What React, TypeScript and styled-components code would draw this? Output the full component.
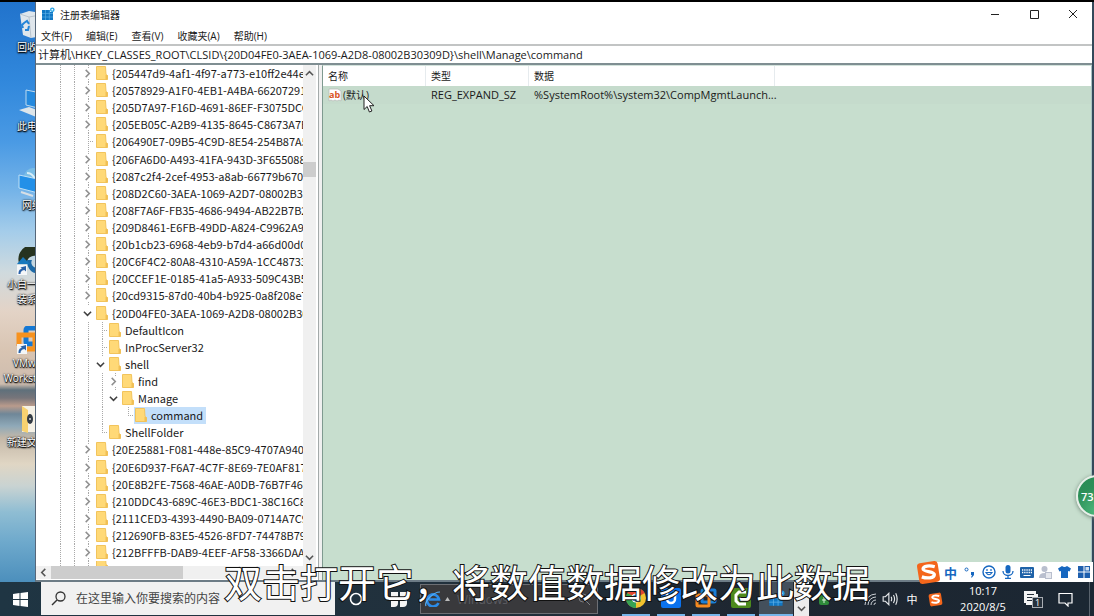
import React from "react";
import styled, { createGlobalStyle, css } from "styled-components";

const uiFont = `"Open Sans", "Noto Sans CJK SC", sans-serif`;
const treeFont = `"Noto Sans CJK SC", sans-serif`;
const dots = "#a9a9a9";

const GlobalStyle = createGlobalStyle`
  * { box-sizing: border-box; }
  body { margin: 0; background: #000; font-family: ${uiFont}; font-size: 11px; color: #1a1a1a; overflow: hidden; }
  button, input { font: inherit; color: inherit; border: 0; padding: 0; margin: 0; background: none; outline: 0; }
  ul { list-style: none; margin: 0; padding: 0; }
  svg { display: block; flex: none; }
`;

const Screen = styled.div`
  position: relative;
  display: flex;
  flex-direction: column;
  height: 100vh;
  border-top: 2px solid #000;
  overflow: hidden;
`;

const Stage = styled.main`
  flex: 1;
  min-height: 0;
  display: flex;
  background: #34495a;
  padding-right: 2px;
`;

/* Desktop */
const Desktop = styled.ul`
  flex: none;
  width: 35px;
  overflow: hidden;
  padding-top: 4px;
  background: linear-gradient(
    to bottom,
    #2173cc 0, #3188dc 80px, #4a9ae4 140px, #76b4e8 190px, #a5cdea 230px,
    #cfdade 270px, #e3d3c6 310px, #d8c4b2 350px, #cdbcae 382px, #5f707b 388px,
    #77757a 396px, #b99b8c 404px, #6f8798 412px, #8fa9b8 424px, #c4b8a8 436px,
    #e0d6c4 462px, #c9d3d2 484px, #8fbdd3 510px, #6ea9cc 540px, #4c8fbc 580px
  );
`;

const Shortcut = styled.li`
  width: 64px;
  height: 79px;
  padding-top: 4px;
  display: flex;
  flex-direction: column;
  align-items: center;
  gap: 1px;
  font-size: 10px;
  line-height: 15px;
  text-align: center;
  white-space: pre;
  color: #fff;
  text-shadow: 0 1px 1px #000, 1px 1px 2px #000, 0 0 2px #000;
`;

/* Window */
const Window = styled.section`
  flex: 1;
  min-width: 0;
  display: flex;
  flex-direction: column;
  background: #fff;
  border-left: 1px solid #56677a;
  border-bottom: 2px solid #6d7c86;
`;

const TitleBar = styled.header`
  display: flex;
  align-items: center;
  height: 24px;
  padding-left: 5px;
  gap: 5px;
`;

const Title = styled.h1`
  flex: 1;
  margin: 0;
  font-size: 10px;
  font-weight: 400;
`;

const WindowButtons = styled.div`
  display: flex;
`;

const WindowButton = styled.button`
  width: 39px;
  height: 24px;
  display: grid;
  place-items: center;
`;

const MenuBar = styled.nav`
  display: flex;
  align-items: center;
  gap: 14px;
  height: 18px;
  padding-left: 5px;
  font-size: 10px;
`;

const AddressBar = styled.input`
  && {
    width: 100%;
    height: 21px;
    padding: 0 2px 2px;
    font-size: 11px;
    border-top: 2px solid #c2c4c4;
    border-bottom: 2px solid #7f8e92;
  }
`;

const Panes = styled.div`
  flex: 1;
  min-height: 0;
  display: flex;
`;

const TreePane = styled.div`
  flex: none;
  width: 283px;
  padding-right: 2px;
  display: flex;
  flex-direction: column;
  background: #fff;
  border-right: 1px solid #a4aaaa;
`;

const TreeBody = styled.div`
  flex: 1;
  min-height: 0;
  display: flex;
`;

const Tree = styled.ul`
  flex: 1;
  min-width: 0;
  display: flex;
  flex-direction: column;
  overflow: hidden;
  font-family: ${treeFont};
`;

const TreeRow = styled.li<{ $cut?: boolean }>`
  flex: ${(p) => (p.$cut ? "0 0 5px" : "1 1 0")};
  min-height: 0;
  display: flex;
  align-items: ${(p) => (p.$cut ? "flex-start" : "center")};
  overflow: hidden;
  padding-left: 17px;
  white-space: nowrap;
`;

type CellKind = "line" | "blank" | "branch" | "end" | "closed" | "open";

const Cell = styled.span<{ $kind: CellKind; $deep: boolean }>`
  flex: none;
  align-self: stretch;
  width: ${(p) => (p.$deep ? 13 : 14)}px;
  padding-right: 2px;
  display: grid;
  place-items: center;
  background-repeat: no-repeat;
  ${(p) =>
    (p.$kind === "line" || p.$kind === "branch" || p.$kind === "end") &&
    css`
      background-image: repeating-linear-gradient(to bottom, ${dots} 0 1px, transparent 1px 2px)
        ${p.$kind === "line" ? "" : `, repeating-linear-gradient(to right, ${dots} 0 1px, transparent 1px 2px)`};
      background-size: 1px ${p.$kind === "end" ? "50%" : "100%"}, 6px 1px;
      background-position: 7px 0, 7px 50%;
    `}
  ${(p) =>
    p.$kind === "closed" &&
    css`
      background-image: repeating-linear-gradient(to bottom, ${dots} 0 1px, transparent 1px 2px),
        repeating-linear-gradient(to bottom, ${dots} 0 1px, transparent 1px 2px);
      background-size: 1px 3px, 1px 3px;
      background-position: 7px 0, 7px 100%;
    `}
`;

const Node = styled.span<{ $selected?: boolean }>`
  display: flex;
  align-items: center;
  gap: 4px;
  height: 100%;
  padding: 0 3px 1px 1px;
  background: ${(p) => (p.$selected ? "#c3dffa" : "none")};
`;

const ScrollV = styled.div`
  flex: none;
  width: 13px;
  display: flex;
  flex-direction: column;
  align-items: center;
  background: #f0f0f0;
`;

const ScrollTrack = styled.div`
  flex: 1;
  width: 100%;
  padding-top: 80px;
`;

const ThumbV = styled.div`
  height: 15px;
  background: #cdcdcd;
`;

const ScrollH = styled.div`
  height: 13px;
  margin-bottom: 1px;
  display: flex;
  align-items: center;
  background: #f0f0f0;
`;

const ThumbTrack = styled.div`
  flex: 1;
  height: 100%;
`;

const ThumbH = styled.div`
  width: 56%;
  height: 100%;
  background: #cdcdcd;
`;

const ArrowButton = styled.button`
  flex: none;
  width: 15px;
  height: 17px;
  display: grid;
  place-items: center;
`;

const ListPane = styled.div`
  flex: 1;
  min-width: 0;
  margin-left: 3px;
  background: #c7dece;
  border-left: 1px solid #7f9a90;
  border-top: 1px solid #d3e3dc;
  border-right: 1px solid #a9c3c4;
`;

const Splitter = styled.div`
  display: flex;
  flex: 1;
  min-width: 0;
  background: #f0f0f0;
`;

const ValueTable = styled.table`
  width: 100%;
  table-layout: fixed;
  border-collapse: separate;
  border-spacing: 0;
  text-align: left;
  line-height: 16px;
`;

const Col = styled.col<{ $width?: number }>`
  width: ${(p) => (p.$width ? `${p.$width}px` : "auto")};
`;

const HeadCell = styled.th`
  height: 20px;
  padding: 0 5px;
  font-weight: 400;
  font-size: 10px;
  background: #fff;
  border-right: 1px solid #e6ebee;
  &:last-child { border-right: 0; }
`;

const DataCell = styled.td`
  height: 18px;
  padding: 0 5px;
  white-space: nowrap;
  background: #c5dbcc;
`;

const ValueName = styled.span`
  display: flex;
  align-items: center;
  gap: 1px;
  font-size: 10px;
`;

/* Taskbar */
const Taskbar = styled.footer`
  flex: none;
  display: flex;
  height: 34px;
  color: #fff;
  background: linear-gradient(to right, #1f3543, #21303c 40%, #1e2630 70%, #1b2733);
`;

const StartButton = styled.button`
  flex: none;
  width: 41px;
  display: grid;
  place-items: center;
`;

const SearchBox = styled.label`
  flex: none;
  width: 294px;
  height: 33px;
  display: flex;
  align-items: center;
  gap: 10px;
  padding-left: 10px;
  background: #f1f1f1;
  color: #333;
`;

const SearchInput = styled.input`
  flex: 1;
  min-width: 0;
  && { font-size: 12px; }
  &::placeholder { color: #444; opacity: 1; }
`;

const TaskButton = styled.button<{ $width: number }>`
  flex: none;
  width: ${(p) => p.$width}px;
  display: grid;
  place-items: center;
`;

const SearchGroup = styled.div`
  flex: none;
  width: 178px;
  height: 30px;
  margin: 2px 24px 0 0;
  padding: 0 6px 0 4px;
  display: flex;
  align-items: center;
  gap: 4px;
  background: #39393c;
  border: 1px solid #6d6f74;
  font-size: 12px;
  color: #5c5d62;
`;

const GroupLabel = styled.span`
  flex: 1;
  padding-left: 3px;
`;

const RunningApps = styled.div`
  flex: none;
  display: flex;
  gap: 7px;
`;

const AppButton = styled.button<{ $active?: boolean }>`
  && {
    width: ${(p) => (p.$active ? 34 : 28)}px;
    margin-left: ${(p) => (p.$active ? -3 : 0)}px;
    display: grid;
    place-items: center;
    border-bottom: 2px solid #76b5ea;
    background: ${(p) => (p.$active ? "#44505c" : "none")};
  }
`;

const TaskScroll = styled.button`
  && {
    flex: none;
    width: 15px;
    margin-left: 1px;
    padding-top: 18px;
    display: grid;
    place-items: center;
    background: #ececec;
  }
`;

const Tray = styled.div`
  flex: 1;
  display: flex;
  align-items: center;
  justify-content: flex-end;
`;

const TrayStart = styled.div`
  flex: 1;
`;

const TrayButton = styled.button<{ $width: number }>`
  flex: none;
  width: ${(p) => p.$width}px;
  height: 34px;
  display: grid;
  place-items: center;
`;

const Clock = styled.time`
  flex: none;
  width: 76px;
  font-size: 11px;
  line-height: 16px;
  text-align: center;
`;

const ShowDesktop = styled.button`
  && {
    width: 5px;
    height: 34px;
    margin-left: 4px;
    border-left: 1px solid #59636d;
  }
`;

/* Overlays */
const Caption = styled.p`
  position: absolute;
  left: 0;
  right: 0;
  bottom: 11px;
  margin: 0;
  text-align: center;
  font-family: "Noto Sans CJK SC", sans-serif;
  font-weight: 400;
  font-size: 38px;
  line-height: 48px;
  color: #fff;
  -webkit-text-stroke: 2px #111;
  paint-order: stroke fill;
  white-space: nowrap;
  pointer-events: none;
`;

const ImeBar = styled.div`
  position: absolute;
  right: 1px;
  bottom: 34px;
  height: 20px;
  display: flex;
  align-items: center;
  background: #fff;
  color: #1667c0;
  font-size: 13px;
`;

const ImeLogo = styled.span`
  width: 14px;
  display: flex;
  justify-content: flex-end;
`;

const ImeButton = styled.button`
  width: 19px;
  height: 20px;
  display: grid;
  place-items: center;
  font-weight: 700;
`;

const FloatBall = styled.button`
  && {
    position: absolute;
    right: -24px;
    bottom: 99px;
    width: 42px;
    height: 42px;
    padding-left: 3px;
    text-align: left;
    font-size: 11px;
    font-weight: 600;
    color: #fff;
    border: 2px solid #e8efe9;
    border-radius: 50%;
    background: radial-gradient(circle at 50% 90%, #4db87c, #2c8f58 60%, #2a8b55);
    box-shadow: 0 1px 4px #6f8577;
  }
`;

const Pointer = styled.svg`
  position: absolute;
  left: 363px;
  top: 93px;
`;

/* Drawings */
const Folder = () => (
  <svg width="12" height="14" viewBox="0 0 12 14">
    <path d="M0.5 0.5h9l.5 8 1.500 1v4H0.500z" fill="#ffd977" stroke="#f2c45c" />
    <path d="M9.500 9h2v4.500h-2z" fill="#f0bf55" />
  </svg>
);

const Chevron = ({ dir, color = "#555", size = 9 }: { dir: "left" | "right" | "up" | "down"; color?: string; size?: number }) => {
  const d = { right: "M3 1l4 4-4 4", left: "M7 1L3 5l4 4", up: "M1 7l4-4 4 4", down: "M1 3l4 4 4-4" }[dir];
  return (
    <svg width={size} height={size} viewBox="0 0 10 10">
      <path d={d} fill="none" stroke={color} strokeWidth="1.700" />
    </svg>
  );
};

const RegIcon = ({ size = 14 }: { size?: number }) => (
  <svg width={size} height={size} viewBox="0 0 14 14">
    <path d="M1 3h8v2h3v8H1z" fill="#1177c4" />
    <path d="M1 6.500h11M1 10h11M4.500 3v10M8.300 3v10" stroke="#5fb2ea" strokeWidth=".6" />
    <circle cx="11.300" cy="2.700" r="2.300" fill="#2aa4e6" />
    <circle cx="11.300" cy="2.700" r=".9" fill="#fff" />
  </svg>
);

const SogouIcon = ({ size }: { size: number }) => (
  <svg width={size} height={size} viewBox="0 0 24 24">
    <rect x="2" y="2" width="20" height="20" rx="3" fill="#f4661b" transform="rotate(-9 12 12)" />
    <path d="M18 6.500C13 5 7 5.500 6.800 8.500c-.1 3.200 11 2 10.800 5.500-.2 3.500-7 4-12 2.200" fill="none" stroke="#fff" strokeWidth="3.200" />
  </svg>
);

const ShortcutArrow = () => (
  <g>
    <path d="M1 18h10v10H1z" fill="#f4f6f8" />
    <path d="M2.500 27c0-4 1.500-5 3.500-5l-1.500-1.500L10 19v5.500L8.300 23C5.500 23.500 4.500 25 4.500 27z" fill="#2a62a8" />
  </g>
);

const shortcutArt: Record<string, React.ReactNode> = {
  bin: (
    <>
      <path d="M4 4l9-3 17 3-3 22-12 2-8-3z" fill="#dfe6ec" />
      <path d="M4 4l9 3 17-3M13 7l2 21" stroke="#b9c4ce" fill="none" />
      <path d="M8 13l3-2 2 3M13 16l-1 4H9M7 18l-1-3 2-2" fill="none" stroke="#2384d8" strokeWidth="2" />
    </>
  ),
  pc: (
    <>
      <path d="M10 1l20 4v16l-20-5z" fill="#2489de" stroke="#bcd9ee" />
      <path d="M3 21l10-3 16 6-9 4z" fill="#dde5ea" />
    </>
  ),
  network: (
    <>
      <circle cx="17" cy="9" r="9" fill="#79bde6" />
      <path d="M11 5c5 0 8 4 8 9" stroke="#d7eef9" fill="none" strokeWidth="2" />
      <path d="M3 7l23 5v14L3 20z" fill="#2390e8" stroke="#bfe0f6" />
      <path d="M5 24l12 4" stroke="#d7dfe5" strokeWidth="2" />
    </>
  ),
  installer: (
    <>
      <path d="M3 16A14 14 0 0 1 30 8l-7 3a7 7 0 0 0-12 5z" fill="#26331f" />
      <path d="M11 13h5a5 5 0 0 0 9 5v8c-8 2-14-3-14-13z" fill="#1d6aa8" />
      <path d="M7 10l7 7H1z" fill="#1878bd" />
      <ShortcutArrow />
    </>
  ),
  vmware: (
    <>
      <rect x="10" y="2" width="18" height="16" rx="2" fill="none" stroke="#1478d4" strokeWidth="5" />
      <path d="M3 20V9h16v14h-8" fill="none" stroke="#f7921e" strokeWidth="5" />
      <ShortcutArrow />
    </>
  ),
  folder: (
    <>
      <path d="M6 1h22v26H6z" fill="#f5f1e6" />
      <path d="M6 1l6 4v23l-6-2z" fill="#f8d270" />
      <ellipse cx="14" cy="14" rx="3" ry="5" fill="#333b44" />
      <circle cx="14" cy="14" r="1" fill="#d9dde0" />
    </>
  ),
};

const shortcuts = [
  { art: "bin", label: "回收站" },
  { art: "pc", label: "此电脑" },
  { art: "network", label: "网络" },
  { art: "installer", label: "小白一键重\n装系统" },
  { art: "vmware", label: "VMware\nWorkstation" },
  { art: "folder", label: "新建文件夹" },
];

const menus = ["文件(F)", "编辑(E)", "查看(V)", "收藏夹(A)", "帮助(H)"];

const root: CellKind[] = ["line", "line"];
const key = (label: string, last: CellKind = "closed") => ({ label, cells: [...root, last] });
const sub = (label: string, ...cells: CellKind[]) => ({ label, cells: [...root, "line" as CellKind, ...cells] });

const treeRows = [
  key("{205447d9-4af1-4f97-a773-e10ff2e44e7a}"),
  key("{20578929-A1F0-4EB1-A4BA-66207291A0C5}"),
  key("{205D7A97-F16D-4691-86EF-F3075DCCA57D}"),
  key("{205EB05C-A2B9-4135-8645-C8673A7B21D0}"),
  key("{206490E7-09B5-4C9D-8E54-254B87A5C1F2}", "branch"),
  key("{206FA6D0-A493-41FA-943D-3F6550887BC4}"),
  key("{2087c2f4-2cef-4953-a8ab-66779b670495}"),
  key("{208D2C60-3AEA-1069-A2D7-08002B30309D}"),
  key("{208F7A6F-FB35-4686-9494-AB22B7B2C43A}"),
  key("{209D8461-E6FB-49DD-A824-C9962A9D10E3}"),
  key("{20b1cb23-6968-4eb9-b7d4-a66d00d07cee}"),
  key("{20C6F4C2-80A8-4310-A59A-1CC48733A9E1}"),
  key("{20CCEF1E-0185-41a5-A933-509C43B54F98}"),
  key("{20cd9315-87d0-40b4-b925-0a8f208e7b5c}"),
  key("{20D04FE0-3AEA-1069-A2D8-08002B30309D}", "open"),
  sub("DefaultIcon", "branch"),
  sub("InProcServer32", "branch"),
  sub("shell", "open"),
  sub("find", "line", "closed"),
  sub("Manage", "line", "open"),
  sub("command", "line", "blank", "end"),
  sub("ShellFolder", "end"),
  key("{20E25881-F081-448e-85C9-4707A940C1D7}"),
  key("{20E6D937-F6A7-4C7F-8E69-7E0AF817F5C0}"),
  key("{20E8B2FE-7568-46AE-A0DB-76B7F469B92F}"),
  key("{210DDC43-689C-46E3-BDC1-38C16C8E41A7}"),
  key("{2111CED3-4393-4490-BA09-0714A7C9D2B6}"),
  key("{212690FB-83E5-4526-8FD7-74478B7939CD}"),
  key("{212BFFFB-DAB9-4EEF-AF58-3366DAAF7E10}"),
];

const Guides = ({ cells }: { cells: CellKind[] }) => (
  <>
    {cells.map((kind, i) => (
      <Cell key={i} $kind={kind} $deep={i > 2}>
        {kind === "closed" && <Chevron dir="right" color="#8f8f8f" />}
        {kind === "open" && <Chevron dir="down" color="#404040" />}
      </Cell>
    ))}
  </>
);

const AppArt = ({ name }: { name: string }) => (
  <svg width="22" height="22" viewBox="0 0 22 22">
    {name === "Chrome" && (
      <>
        <circle cx="11" cy="11" r="10" fill="#f2c22e" />
        <path d="M11 11L2.300 6A10 10 0 0 1 19.700 6z" fill="#e0452f" />
        <path d="M11 11L2.300 6A10 10 0 0 0 11 21z" fill="#37a353" />
        <circle cx="11" cy="11" r="4.600" fill="#fff" />
        <circle cx="11" cy="11" r="3.600" fill="#3f80e6" />
      </>
    )}
    {name === "U 盘工具" && (
      <>
        <rect x="1" y="1" width="20" height="20" rx="2" fill="#0a72ee" />
        <path d="M7 4v8a4 4 0 0 0 8 0V4" fill="none" stroke="#fff" strokeWidth="2.500" />
      </>
    )}
    {name === "VMware" && (
      <>
        <rect x="7" y="3" width="13" height="12" rx="1" fill="none" stroke="#1b7fd6" strokeWidth="3" />
        <rect x="2" y="8" width="12" height="11" rx="1" fill="none" stroke="#f58a1f" strokeWidth="3" />
      </>
    )}
    {name === "Camtasia" && (
      <>
        <rect x="1" y="1" width="20" height="20" rx="2" fill="#4d8a1c" />
        <path d="M16 5H9L6 8v6l3 3h7" fill="none" stroke="#fff" strokeWidth="3" />
      </>
    )}
  </svg>
);

const App = () => (
  <>
    <GlobalStyle />
    <Screen>
      <Stage>
        <Desktop>
          {shortcuts.map((s) => (
            <Shortcut key={s.art}>
              <svg width="32" height="29" viewBox="0 0 32 29">{shortcutArt[s.art]}</svg>
              {s.label}
            </Shortcut>
          ))}
        </Desktop>

        <Window>
          <TitleBar>
            <RegIcon />
            <Title>注册表编辑器</Title>
            <WindowButtons>
              <WindowButton aria-label="最小化">
                <svg width="10" height="10" viewBox="0 0 10 10"><path d="M1 5.500h8" stroke="#222" /></svg>
              </WindowButton>
              <WindowButton aria-label="最大化">
                <svg width="10" height="10" viewBox="0 0 10 10"><path d="M1.500 1.500h8v8h-8z" fill="none" stroke="#222" /></svg>
              </WindowButton>
              <WindowButton aria-label="关闭">
                <svg width="10" height="10" viewBox="0 0 10 10"><path d="M1 1l8 8M9 1L1 9" stroke="#222" /></svg>
              </WindowButton>
            </WindowButtons>
          </TitleBar>
          <MenuBar>
            {menus.map((m) => <button key={m}>{m}</button>)}
          </MenuBar>
          <AddressBar
            aria-label="地址"
            defaultValue="计算机\HKEY_CLASSES_ROOT\CLSID\{20D04FE0-3AEA-1069-A2D8-08002B30309D}\shell\Manage\command"
          />
          <Panes>
            <TreePane>
              <TreeBody>
                <Tree>
                  {treeRows.map((row) => (
                    <TreeRow key={row.label}>
                      <Guides cells={row.cells} />
                      <Node $selected={row.label === "command"}>
                        <Folder />
                        {row.label}
                      </Node>
                    </TreeRow>
                  ))}
                  <TreeRow $cut>
                    <Guides cells={["line", "line", "line"]} />
                    <Node><Folder /></Node>
                  </TreeRow>
                </Tree>
                <ScrollV>
                  <ArrowButton aria-label="向上滚动"><Chevron dir="up" /></ArrowButton>
                  <ScrollTrack><ThumbV /></ScrollTrack>
                  <ArrowButton aria-label="向下滚动"><Chevron dir="down" /></ArrowButton>
                </ScrollV>
              </TreeBody>
              <ScrollH>
                <ArrowButton aria-label="向左滚动"><Chevron dir="left" /></ArrowButton>
                <ThumbTrack><ThumbH /></ThumbTrack>
                <ArrowButton aria-label="向右滚动"><Chevron dir="right" /></ArrowButton>
                <ArrowButton as="span" />
              </ScrollH>
            </TreePane>
            <Splitter>
              <ListPane>
                <ValueTable>
                  <colgroup>
                    <Col $width={103} />
                    <Col $width={103} />
                    <Col $width={246} />
                    <Col />
                  </colgroup>
                  <thead>
                    <tr>
                      <HeadCell>名称</HeadCell>
                      <HeadCell>类型</HeadCell>
                      <HeadCell>数据</HeadCell>
                      <HeadCell />
                    </tr>
                  </thead>
                  <tbody>
                    <tr>
                      <DataCell>
                        <ValueName>
                          <svg width="14" height="14" viewBox="0 0 14 14">
                            <path d="M1 1h9l3 2v10l-2-1-2 1-2-1-2 1-2-1-2 1z" fill="#fff" stroke="#b9bdb9" strokeWidth=".8" />
                            <text x="1" y="10" fontSize="9" fontWeight="700" fill="#d9541e" fontFamily="Open Sans, sans-serif">ab</text>
                          </svg>
                          (默认)
                        </ValueName>
                      </DataCell>
                      <DataCell>REG_EXPAND_SZ</DataCell>
                      <DataCell>%SystemRoot%\system32\CompMgmtLaunch...</DataCell>
                      <DataCell />
                    </tr>
                  </tbody>
                </ValueTable>
              </ListPane>
            </Splitter>
          </Panes>
        </Window>
      </Stage>

      <Taskbar>
        <StartButton aria-label="开始">
          <svg width="15" height="15" viewBox="0 0 15 15">
            <path d="M0 2l6.500-1v6H0zM7.500.9L15 0v7H7.500zM0 8h6.500v6L0 13zM7.500 8H15v7l-7.500-1z" fill="#fff" />
          </svg>
        </StartButton>
        <SearchBox>
          <svg width="15" height="15" viewBox="0 0 15 15">
            <circle cx="9.500" cy="5.500" r="4.500" fill="none" stroke="#333" strokeWidth="1.300" />
            <path d="M6 9l-5 5" stroke="#333" strokeWidth="1.500" />
          </svg>
          <SearchInput aria-label="搜索" placeholder="在这里输入你要搜索的内容" />
        </SearchBox>
        <TaskButton $width={42} aria-label="Cortana">
          <svg width="14" height="14" viewBox="0 0 14 14"><circle cx="7" cy="7" r="5.500" fill="none" stroke="#fff" strokeWidth="1.600" /></svg>
        </TaskButton>
        <TaskButton $width={43} aria-label="任务视图">
          <svg width="18" height="18" viewBox="0 0 18 18">
            <path d="M1 2h7v6H1zM10 2h7v6h-7zM1 10h7v3a4 4 0 0 1-4 4H1zM10 10h7v3a4 4 0 0 1-4 4h-3z" fill="#f5f5f5" />
          </svg>
        </TaskButton>
        <SearchGroup>
          <svg width="16" height="16" viewBox="0 0 16 16">
            <path d="M13.500 12A6 6 0 1 1 14 8.500H4" fill="none" stroke="#2b8be8" strokeWidth="2.600" />
            <path d="M1 15C-1 11 8 1 15 1" fill="none" stroke="#58b0f5" strokeWidth="1.200" />
          </svg>
          <svg width="5" height="4" viewBox="0 0 5 4"><path d="M0 4l2.500-4L5 4z" fill="#bbb" /></svg>
          <GroupLabel>Windows</GroupLabel>
          <svg width="13" height="13" viewBox="0 0 13 13">
            <circle cx="5" cy="5" r="4" fill="none" stroke="#7c7d82" />
            <path d="M8 8l4 4" stroke="#7c7d82" />
          </svg>
        </SearchGroup>
        <RunningApps>
          {["Chrome", "U 盘工具", "VMware", "Camtasia"].map((n) => (
            <AppButton key={n} aria-label={n}><AppArt name={n} /></AppButton>
          ))}
          <AppButton $active aria-label="注册表编辑器"><RegIcon size={17} /></AppButton>
        </RunningApps>
        <TaskScroll aria-label="更多任务"><Chevron dir="down" /></TaskScroll>
        <Tray>
          <TrayStart>
            <TrayButton $width={30} aria-label="安全中心">
              <svg width="10" height="14" viewBox="0 0 10 14">
                <rect y="3" width="10" height="10" rx="2" fill="#2f8a3a" />
                <path d="M5 5v6M3 8h4" stroke="#d8f0d8" />
              </svg>
            </TrayButton>
          </TrayStart>
          <TrayButton $width={22} aria-label="网络">
            <svg width="13" height="13" viewBox="0 0 13 13">
              <path d="M1 12A11 11 0 0 1 12 1M4 12a8 8 0 0 1 8-8M7 12a5 5 0 0 1 5-5M10 12a2 2 0 0 1 2-2" fill="none" stroke="#c9ced3" />
            </svg>
          </TrayButton>
          <TrayButton $width={18} aria-label="音量">
            <svg width="16" height="14" viewBox="0 0 14 12">
              <path d="M1 4h2l3-3v10L3 8H1zM8 4q1 2 0 4M10 2.500q2 3.500 0 7M12 1q2.500 5 0 10" fill="none" stroke="#e5e8ea" />
            </svg>
          </TrayButton>
          <TrayButton $width={26}>中</TrayButton>
          <TrayButton $width={20} aria-label="搜狗输入法"><SogouIcon size={15} /></TrayButton>
          <Clock>10:17<br />2020/8/5</Clock>
          <TrayButton $width={24} aria-label="输入面板">
            <svg width="20" height="20" viewBox="0 0 20 20">
              <path d="M1 2h12v3h2v11H3v-2H1z" fill="#f4f4f4" />
              <path d="M4 5.500h7M4 8.500h7M4 11.500h5" stroke="#26303a" />
              <rect x="9.500" y="8.500" width="10" height="10" fill="#26303a" stroke="#a8adb3" />
              <text x="12" y="17" fontSize="9" fill="#fff" fontFamily="Open Sans, sans-serif">1</text>
            </svg>
          </TrayButton>
          <TrayButton $width={40} aria-label="通知">
            <svg width="15" height="15" viewBox="0 0 15 15">
              <path d="M1 1.500h13v9.500h-4v3l-3-3H1z" fill="none" stroke="#fff" strokeWidth="1.200" />
            </svg>
          </TrayButton>
          <ShowDesktop aria-label="显示桌面" />
        </Tray>
      </Taskbar>

      <FloatBall>73</FloatBall>
      <Caption>双击打开它，将数值数据修改为此数据</Caption>
      <ImeBar>
        <ImeLogo><SogouIcon size={25} /></ImeLogo>
        <ImeButton>中</ImeButton>
        <ImeButton aria-label="标点">
          <svg width="12" height="12" viewBox="0 0 12 12">
            <circle cx="2.500" cy="3.500" r="1.500" fill="none" stroke="#1667c0" />
            <path d="M7 6h3v3l-2 2.500H7L8 9H7z" fill="#1667c0" />
          </svg>
        </ImeButton>
        <ImeButton aria-label="表情">
          <svg width="14" height="14" viewBox="0 0 14 14">
            <circle cx="7" cy="7" r="6" fill="none" stroke="#1667c0" strokeWidth="1.400" />
            <path d="M4 7.500q3 4.500 6 0zM5 4v2M9 4v2" fill="none" stroke="#1667c0" strokeWidth="1.200" />
          </svg>
        </ImeButton>
        <ImeButton aria-label="语音">
          <svg width="12" height="14" viewBox="0 0 12 14">
            <rect x="3.500" y="0" width="5" height="8.500" rx="2.500" fill="#1667c0" />
            <path d="M1 6a5 4.500 0 0 0 10 0M6 10.500V13M3 13.300h6" fill="none" stroke="#1667c0" strokeWidth="1.300" />
          </svg>
        </ImeButton>
        <ImeButton aria-label="键盘">
          <svg width="14" height="11" viewBox="0 0 14 11">
            <rect width="14" height="11" rx="1" fill="#1e62a8" />
            <path d="M2 3h10M2 5.500h10" stroke="#fff" strokeWidth="1.300" strokeDasharray="1.300 .9" />
            <path d="M3.500 8.500h7" stroke="#fff" />
          </svg>
        </ImeButton>
        <ImeButton aria-label="用户">
          <svg width="13" height="13" viewBox="0 0 13 13">
            <circle cx="5.500" cy="3" r="3" fill="#b9bfce" />
            <path d="M0 12q0-5 5.500-5T11 12z" fill="#b9bfce" />
            <rect x="6.500" y="6.500" width="6" height="6" fill="#e6e8ee" stroke="#b9bfce" />
          </svg>
        </ImeButton>
        <ImeButton aria-label="皮肤">
          <svg width="13" height="12" viewBox="0 0 13 12">
            <path d="M4 0q2.500 2 5 0l4 2.500-1.500 3-1.500-.5v7H3V5l-1.500.5L0 2.500z" fill="#1667c0" />
          </svg>
        </ImeButton>
        <ImeButton aria-label="工具箱">
          <svg width="12" height="12" viewBox="0 0 12 12">
            <path d="M0 0h5.500v5.500H0zM0 6.500h5.500V12H0zM6.500 6.500H12V12H6.500z" fill="#1e5fae" />
            <rect x="7" y=".5" width="4.500" height="4.500" fill="#cfe0f2" stroke="#1e5fae" />
          </svg>
        </ImeButton>
      </ImeBar>
      <Pointer width="12" height="19" viewBox="0 0 12 19">
        <path d="M1 1v13.500l3.200-3 2.200 5.500 2.500-1-2.300-5.300H11z" fill="#fff" stroke="#222" />
      </Pointer>
    </Screen>
  </>
);

export default App;
